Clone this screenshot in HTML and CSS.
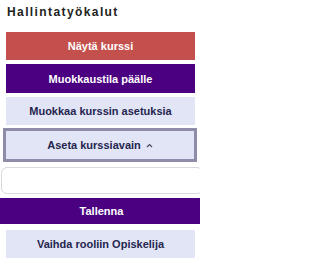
FILE: index.html
```html
<!DOCTYPE html>
<html lang="fi">
<head>
<meta charset="utf-8">
<link rel="stylesheet" href="styles.css">
</head>
<body>
<div class="block">
  <h2 class="title">Hallintatyökalut</h2>
  <div class="actions">
    <button class="btn btn-red">Näytä kurssi</button>
    <button class="btn btn-purple mt4">Muokkaustila päälle</button>
    <button class="btn btn-light mt4">Muokkaa kurssin asetuksia</button>
    <button class="btn btn-light btn-focus mt6">Aseta kurssiavain <svg class="chev" width="7" height="5" viewBox="0 0 7 5"><polyline points="1,4 3.5,1.5 6,4" fill="none" stroke="#4a4a5e" stroke-width="1.2"/></svg></button>
    <form class="keyform">
      <input class="keyinput" type="text">
      <button type="button" class="btn-save">Tallenna</button>
    </form>
    <button class="btn btn-light mt6">Vaihda rooliin Opiskelija</button>
  </div>
</div>
</body>
</html>
```

FILE: styles.css
```css
html, body {
  margin: 0;
  padding: 0;
  background: #ffffff;
  overflow: hidden;
}
body {
  width: 200px;
  height: 263px;
  font-family: "Liberation Sans", Arial, sans-serif;
}
.block {
  display: flex;
  flex-direction: column;
}
.title {
  margin: 0;
  padding: 5px 0 0 7px;
  height: 32px;
  box-sizing: border-box;
  font-size: 12px;
  line-height: 14px;
  font-weight: bold;
  letter-spacing: 1.4px;
  color: #222222;
}
.actions {
  display: flex;
  flex-direction: column;
}
.btn {
  display: flex;
  align-items: center;
  justify-content: center;
  gap: 5px;
  margin: 0 5px 0 6px;
  height: 28px;
  border: 0;
  padding: 0;
  font-family: "Liberation Sans", Arial, sans-serif;
  font-size: 11px;
  font-weight: bold;
  line-height: 14px;
}
.mt4 { margin-top: 4px; }
.mt6 { margin-top: 6px; }
.btn-red {
  background: #c4504e;
  color: #ffffff;
}
.btn-purple {
  background: #4b0082;
  color: #ffffff;
  height: 29px;
}
.btn-light {
  background: #e2e5f5;
  color: #25254f;
}
.btn-focus {
  box-shadow: 0 0 0 3px #8e8ca9;
  margin-left: 6px;
  margin-right: 6px;
}
.chev {
  display: block;
}
.keyform {
  display: flex;
  flex-direction: column;
  margin: 8px 0 0 0;
  width: 203px;
}
.keyinput {
  display: block;
  margin: 0 0 0 1px;
  height: 27px;
  box-sizing: border-box;
  border: 1px solid #d8d8de;
  border-radius: 6px;
  background: #ffffff;
  padding: 0 6px;
}
.btn-save {
  margin-top: 4px;
  height: 26px;
  border: 0;
  padding: 0;
  background: #4b0082;
  color: #ffffff;
  font-family: "Liberation Sans", Arial, sans-serif;
  font-size: 11px;
  font-weight: bold;
}
```
